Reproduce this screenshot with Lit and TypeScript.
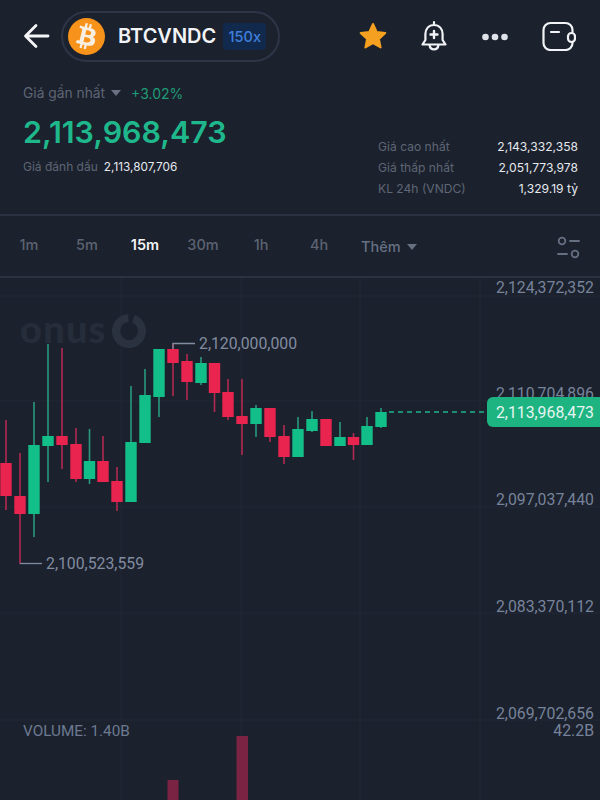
import { LitElement, html, css, svg } from "lit";
import { customElement } from "lit/decorators.js";

type Candle = [number, number, number, number, number, 0 | 1];
// x, wickTop, wickBottom, bodyTop, bodyBottom, up
const CANDLES: Candle[] = [
  [6, 420, 510, 463, 496, 0],
  [20, 453, 564, 496, 514, 0],
  [34, 402, 537, 445, 514, 1],
  [48, 344, 482, 436, 446, 1],
  [62, 348, 469, 436, 445, 0],
  [76, 428, 482, 444, 479, 0],
  [89.5, 429, 484, 461, 479, 1],
  [103, 436, 482, 461, 482, 0],
  [117, 467, 511, 481, 502, 0],
  [131, 386, 502, 442, 502, 1],
  [145, 369, 443, 395, 443, 1],
  [159, 349, 417, 349, 397, 1],
  [173, 343, 396, 349, 363, 0],
  [187, 354, 400, 361, 382, 0],
  [201, 357, 385, 363, 383, 1],
  [214.5, 363, 412, 363, 393, 0],
  [228, 379, 420, 392, 417, 0],
  [242, 379, 455, 416, 424, 0],
  [256, 405, 437, 408, 424, 1],
  [270, 408, 442, 408, 437, 0],
  [284, 425, 464, 436, 457, 0],
  [298, 417, 457, 429, 457, 1],
  [312, 411, 432, 419, 431, 1],
  [326, 419, 446, 419, 446, 0],
  [340, 422, 446, 437, 446, 1],
  [353.5, 433, 460, 437, 445, 0],
  [367, 417, 445, 426, 445, 1],
  [381, 408, 428, 412, 427, 1],
];
const AXIS: [string, number][] = [
  ["2,124,372,352", 293],
  ["2,110,704,896", 399],
  ["2,097,037,440", 505],
  ["2,083,370,112", 612],
  ["2,069,702,656", 719],
];
const HLINES = [296, 401, 507, 613, 720];
const VLINES = [121, 241, 360, 480];
const TABS = ["1m", "5m", "15m", "30m", "1h", "4h"];
const STATS = [
  ["Giá cao nhất", "2,143,332,358"],
  ["Giá thấp nhất", "2,051,773,978"],
  ["KL 24h (VNDC)", "1,329.19 tỷ"],
];

@customElement("app-root")
export class AppRoot extends LitElement {
  static styles = css`
    :host {
      display: block;
      width: 600px;
      height: 800px;
      overflow: hidden;
      background: #1b212d;
      font-family: Inter, "Noto Sans", sans-serif;
    }
    .page { display: flex; flex-direction: column; height: 800px; }
    .top {
      height: 72px;
      flex: none;
      display: flex;
      align-items: center;
      padding-left: 23px;
    }
    .back { width: 27px; height: 26px; flex: none; }
    .pill {
      margin-left: 11px;
      width: 219px;
      height: 51px;
      box-sizing: border-box;
      border: 2px solid #2d3547;
      border-radius: 26px;
      display: flex;
      align-items: center;
      padding-left: 5px;
      flex: none;
    }
    .coin { width: 37px; height: 37px; flex: none; }
    .sym {
      margin-left: 13px;
      color: #f1f3f6;
      font-size: 20px;
      font-weight: 600;
    }
    .lev {
      margin-left: 7px;
      background: #12294e;
      color: #3f7fdc;
      font-size: 14.5px;
      font-weight: 500;
      height: 27px;
      line-height: 27px;
      width: 43px;
      text-align: center;
      border-radius: 4px;
      flex: none;
    }
    .actions {
      margin-left: 78px;
      display: flex;
      align-items: center;
    }
    .actions svg { display: block; flex: none; }
    .star { width: 30px; }
    .bell { width: 30px; margin-left: 31px; }
    .dots { width: 26px; margin-left: 33px; margin-top: 2px; }
    .wallet { width: 34px; margin-left: 34px; }
    .info {
      height: 144px;
      flex: none;
      box-sizing: border-box;
      border-bottom: 2px solid #2a3140;
      padding: 12px 22px 0 23px;
      display: flex;
      justify-content: space-between;
      align-items: flex-start;
    }
    .left { display: flex; flex-direction: column; }
    .last { display: flex; align-items: center; color: #5f6675; font-size: 13.8px; height: 18px; }
    .tri { width: 0; height: 0; border-left: 5.5px solid transparent; border-right: 5.5px solid transparent; border-top: 6px solid #6a7180; margin: 0 10px 0 6px; }
    .pct { color: #1f9d78; font-size: 14px; }
    .price {
      color: #1fb88c;
      font-size: 30.4px;
      font-weight: 600;
      line-height: 38px;
      margin-top: 11px;
    }
    .mark { display: flex; gap: 6px; font-size: 12px; color: #5f6675; margin-top: 7px; line-height: 18px; }
    .mark b { font-weight: 400; color: #e6e9ee; font-size: 11.8px; }
    .stats {
      margin-top: 54px;
      display: grid;
      grid-template-columns: 200px;
      row-gap: 4px;
    }
    .stat { display: flex; justify-content: space-between; height: 17px; line-height: 17px; font-size: 12.1px; }
    .stat span { color: #5f6675; }
    .stat b { font-weight: 400; color: #e6e9ee; }
    .tabs {
      height: 62px;
      flex: none;
      box-sizing: border-box;
      border-bottom: 2px solid #2a3140;
      padding-bottom: 4px;
      display: flex;
      align-items: center;
      padding-right: 20px;
    }
    .tab { width: 58px; text-align: center; color: #5b6372; font-size: 14.5px; font-weight: 500; flex: none; }
    .tab.on { color: #f1f3f6; font-weight: 600; }
    .more { margin-left: 13px; color: #667083; font-size: 14.5px; font-weight: 500; display: flex; align-items: center; padding-top: 5px; }
    .more .tri { border-left-width: 5px; border-right-width: 5px; border-top-width: 6px; border-top-color: #667083; margin: 0 0 0 6px; }
    .filter { margin-left: auto; margin-top: 8px; display: block; }
    .chart { flex: 1; min-height: 0; }
    .chart svg { display: block; }
    .axis { font-family: Roboto, sans-serif; font-size: 15.8px; fill: #77839a; }
    .note { font-family: Roboto, sans-serif; font-size: 15.8px; fill: #828ca0; }
    .vol { font-family: Roboto, sans-serif; font-size: 15.3px; fill: #6d7a91; }
    .tag { font-family: Roboto, sans-serif; font-size: 15.8px; fill: #e6f5f0; }
    .brand { font-family: Lato, sans-serif; font-size: 38px; font-weight: 900; fill: #262d3a; letter-spacing: 1.2px; }
  `;

  private chart() {
    return html`<svg width="600" height="522" viewBox="0 278 600 522">
      ${HLINES.map((y) => svg`<line x1="0" x2="600" y1=${y} y2=${y} stroke="#232936" stroke-width="1.2"/>`)}
      ${VLINES.map((x) => svg`<line y1="278" y2="800" x1=${x} x2=${x} stroke="#222835" stroke-width="1.2"/>`)}
      <text class="brand" x="20" y="343">onus</text>
      <circle cx="129" cy="331" r="13" fill="none" stroke="#2a3240" stroke-width="8" stroke-dasharray="76 5.7" transform="rotate(-70 129 331)"/>
      <rect x="167.5" y="780" width="11" height="20" fill="#7a2343"/>
      <rect x="236.5" y="736" width="11.5" height="64" fill="#7a2343"/>
      ${CANDLES.map(([x, wt, wb, bt, bb, up]) => {
        const c = up ? "#13bf88" : "#e8244f";
        const w = up ? "#2a9a7c" : "#b32a50";
        return svg`<line x1=${x} x2=${x} y1=${wt} y2=${wb} stroke=${w} stroke-width="1.6"/>
          <rect x=${x - 5.7} y=${bt} width="11.4" height=${bb - bt} fill=${c}/>`;
      })}
      <path d="M173 349V343.5H195" fill="none" stroke="#828ca0" stroke-width="1.3"/>
      <text class="note" x="199" y="349">2,120,000,000</text>
      <path d="M20 563.5H42" fill="none" stroke="#828ca0" stroke-width="1.3"/>
      <text class="note" x="46" y="568.5">2,100,523,559</text>
      ${AXIS.map(([t, y]) => svg`<text class="axis" x="594" y=${y} text-anchor="end">${t}</text>`)}
      <line x1="389" x2="487" y1="412" y2="412" stroke="#1fb48a" stroke-width="1.3" stroke-dasharray="5 4"/>
      <rect x="487" y="397" width="124" height="30" rx="6" fill="#1db482"/>
      <text class="tag" x="594" y="417.5" text-anchor="end">2,113,968,473</text>
      <text class="vol" x="23" y="736">VOLUME: 1.40B</text>
      <text class="axis" x="594" y="736" text-anchor="end">42.2B</text>
    </svg>`;
  }

  render() {
    return html`<div class="page">
      <div class="top">
        <svg class="back" viewBox="0 0 27 26" fill="none" stroke="#f4f5f7" stroke-width="2.8" stroke-linecap="round" stroke-linejoin="round">
          <path d="M25 13H3M13 2.5 2.5 13 13 23.5"/>
        </svg>
        <div class="pill">
          <svg class="coin" viewBox="0 0 24 24">
            <circle cx="12" cy="12" r="12" fill="#f7931a"/>
            <path fill="#f8efe2" transform="translate(12 12) scale(1.12) translate(-12 -12)" d="M17.288 10.291c.24-1.59-.974-2.45-2.64-3.03l.54-2.153-1.315-.33-.525 2.107c-.345-.087-.705-.167-1.064-.25l.526-2.127-1.32-.33-.54 2.165c-.285-.067-.565-.132-.84-.2l-1.815-.45-.35 1.407s.975.225.955.236c.535.136.63.486.615.766l-1.477 5.92c-.075.166-.24.406-.614.314.015.02-.96-.24-.96-.24l-.66 1.51 1.71.426.93.242-.54 2.19 1.32.327.54-2.17c.36.1.705.19 1.05.273l-.51 2.154 1.32.33.545-2.19c2.24.427 3.93.257 4.64-1.774.57-1.637-.03-2.58-1.217-3.196.854-.193 1.5-.76 1.68-1.93h.01zm-3.01 4.22c-.404 1.64-3.157.75-4.05.53l.72-2.9c.896.23 3.757.67 3.33 2.37zm.41-4.24c-.37 1.49-2.662.735-3.405.55l.654-2.64c.744.18 3.137.524 2.75 2.084v.006z"/>
          </svg>
          <span class="sym">BTCVNDC</span>
          <span class="lev">150x</span>
        </div>
        <div class="actions">
          <svg class="star" height="28" viewBox="0 0 30 28">
            <path fill="#f5a020" stroke="#f5a020" stroke-width="2" stroke-linejoin="round" d="M15 2l3.7 8 8.6 1-6.4 5.9 1.7 8.6L15 21.2 7.4 25.5l1.7-8.6L2.7 11l8.6-1z"/>
          </svg>
          <svg class="bell" height="32" viewBox="0 0 30 32" fill="none" stroke="#f1f3f6" stroke-width="2.2" stroke-linecap="round" stroke-linejoin="round">
            <path d="M15 2v3M15 5c-5.4 0-8.6 4-8.6 9v6L3.5 24.5h23L23.6 20v-6c0-5-3.2-9-8.6-9zM10.5 25c.4 2.8 2.4 4.3 4.5 4.3s4.1-1.5 4.5-4.3"/>
            <path d="M15 11v7M11.5 14.5h7" stroke-width="2.4"/>
          </svg>
          <svg class="dots" height="8" viewBox="0 0 26 8" fill="#dfe2e8">
            <circle cx="3.5" cy="4" r="3.3"/><circle cx="13" cy="4" r="3.3"/><circle cx="22.5" cy="4" r="3.3"/>
          </svg>
          <svg class="wallet" height="30" viewBox="0 0 34 30" fill="none" stroke="#f1f3f6" stroke-width="2.2" stroke-linecap="round">
            <path d="M30.5 11V9a7 7 0 0 0-7-7H8.5a7 7 0 0 0-7 7v13a7 7 0 0 0 7 7h15a7 7 0 0 0 7-7v-1"/>
            <path d="M9 11h8"/>
            <rect x="26" y="12" width="7" height="9" rx="3.5"/>
          </svg>
        </div>
      </div>
      <div class="info">
        <div class="left">
          <div class="last">Giá gần nhất<i class="tri"></i><span class="pct">+3.02%</span></div>
          <div class="price">2,113,968,473</div>
          <div class="mark">Giá đánh dấu <b>2,113,807,706</b></div>
        </div>
        <div class="stats">
          ${STATS.map(([k, v]) => html`<div class="stat"><span>${k}</span><b>${v}</b></div>`)}
        </div>
      </div>
      <div class="tabs">
        ${TABS.map((t) => html`<div class="tab ${t === "15m" ? "on" : ""}">${t}</div>`)}
        <div class="more">Thêm<i class="tri"></i></div>
        <svg class="filter" width="24" height="24" viewBox="0 0 24 24" fill="none" stroke="#667083" stroke-width="1.8" stroke-linecap="round">
          <circle cx="6" cy="5" r="3.3"/><path d="M14 5h9M2 18h9"/><circle cx="19" cy="18" r="3.3"/>
        </svg>
      </div>
      <div class="chart">${this.chart()}</div>
    </div>`;
  }
}
